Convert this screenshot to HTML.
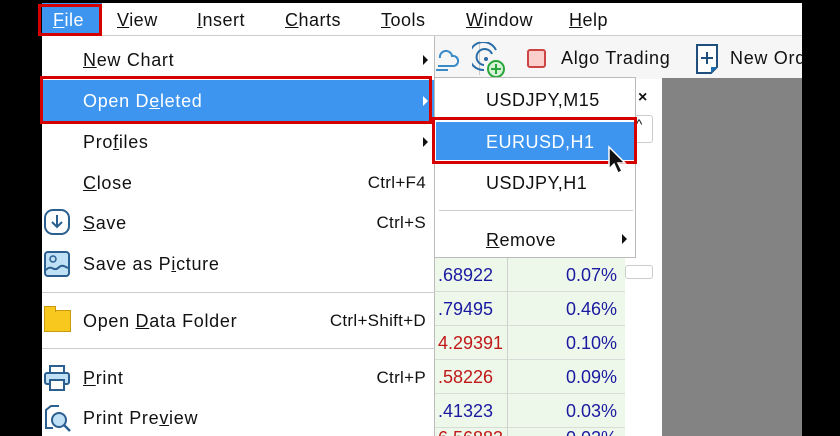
<!DOCTYPE html><html><head><style>
*{margin:0;padding:0;box-sizing:border-box}
html{width:840px;height:436px;overflow:hidden;background:#000}
body{width:840px;height:436px;background:#000;position:relative;overflow:hidden;font-family:"Liberation Sans","Noto Sans CJK JP",sans-serif;color:#111}
.abs{position:absolute;white-space:nowrap}
.mb{left:42px;top:3px;width:760px;height:33px;background:#fff;border-bottom:1px solid #ccc}
.mb span{position:absolute;top:7px;font-size:18px;letter-spacing:0.5px}
.tb{left:42px;top:36px;width:760px;height:43px;background:#f6f6f6;overflow:hidden}
.gray{left:662px;top:78px;width:140px;height:358px;background:#838383}
.panel{left:435px;top:79px;width:227px;height:357px;background:#fff}
.row{position:absolute;left:435px;width:190px;height:34px;background:#eef8ea;border-bottom:1px solid #d8dcd6;overflow:hidden}
.row .a{position:absolute;left:3px;top:7px;font-size:18px}
.row .b{position:absolute;right:8px;top:7px;font-size:18px;color:#1a1aa0}
.vl{position:absolute;left:507px;top:258px;width:1px;height:178px;background:#d0d0d0}
.menu{left:42px;top:36px;width:393px;height:400px;background:#fff;border-right:1px solid #bbb}
.it{position:absolute;left:41px;font-size:18px;letter-spacing:0.7px}
.sc{position:absolute;right:8px;font-size:17px;letter-spacing:0.3px}
.ar{position:absolute;right:6px;width:0;height:0;border-top:5px solid transparent;border-bottom:5px solid transparent;border-left:5px solid #111}
.sep{position:absolute;left:0;width:393px;height:1px;background:#ccc}
.sub{left:434px;top:77px;width:202px;height:181px;background:#fff;border:1px solid #bbb}
.sub .t{position:absolute;left:51px;font-size:18px;letter-spacing:0.5px}
u{text-decoration:underline}
</style></head><body>
<div class="abs mb">
<div class="abs" style="left:0;top:0;width:60px;height:33px;background:#3d95f0"></div>
<span style="left:11px;color:#fff"><u>F</u>ile</span>
<span style="left:75px"><u>V</u>iew</span>
<span style="left:155px"><u>I</u>nsert</span>
<span style="left:243px"><u>C</u>harts</span>
<span style="left:339px"><u>T</u>ools</span>
<span style="left:424px"><u>W</u>indow</span>
<span style="left:527px"><u>H</u>elp</span>
</div>
<div class="abs" style="left:38px;top:4px;width:64px;height:32px;border:3px solid #d40000"></div>
<div class="abs tb">
<div class="abs" style="left:437px;top:5px;width:1px;height:34px;background:#ccc"></div>
<svg class="abs" style="left:390px;top:8px" width="30" height="34"><path d="M8 14a6 6 0 0 1 12-2a5 5 0 0 1 2 10H6" fill="none" stroke="#3a8ac8" stroke-width="2"/><path d="M4 26h12" stroke="#3a8ac8" stroke-width="2"/></svg>
<svg class="abs" style="left:430px;top:6px" width="36" height="36"><path d="M24 8a14 14 0 1 0 -12 20" fill="none" stroke="#2a6da8" stroke-width="2"/><path d="M20 12a8 8 0 1 0 -8 11" fill="none" stroke="#2a6da8" stroke-width="2"/><circle cx="14" cy="17" r="2" fill="#2a6da8"/><circle cx="24" cy="27" r="8" fill="#d7f3d7" stroke="#29a63a" stroke-width="2"/><path d="M24 22v10M19 27h10" stroke="#29a63a" stroke-width="2"/></svg>
<div class="abs" style="left:485px;top:13px;width:19px;height:19px;background:#fbd0cc;border:2px solid #c44;border-radius:3px"></div>
<span class="abs" style="left:519px;top:12px;font-size:18px;letter-spacing:0.7px">Algo Trading</span>
<svg class="abs" style="left:652px;top:6px" width="26" height="34"><path d="M3 3h20v22l-6 6H3z" fill="#fff" stroke="#1f4f7a" stroke-width="2"/><path d="M13 10v12M7 16h12" stroke="#1f4f7a" stroke-width="2"/><path d="M17 31v-6h6" fill="#1f6fb0"/></svg>
<span class="abs" style="left:688px;top:12px;font-size:18px;letter-spacing:0.7px">New Order</span>
</div>
<div class="abs gray"></div>
<div class="abs panel">
<span class="abs" style="left:203px;top:10px;font-size:16px;font-weight:bold">×</span>
<div class="abs" style="left:190px;top:36px;width:28px;height:28px;border:1px solid #ccc;border-radius:3px;font-size:14px;text-align:center">^</div>
<div class="abs" style="left:190px;top:186px;width:28px;height:14px;border:1px solid #ccc;border-radius:3px"></div>
</div>
<div class="row" style="top:258px"><span class="a" style="color:#1a1aa0">.68922</span><span class="b">0.07%</span></div>
<div class="row" style="top:292px"><span class="a" style="color:#1a1aa0">.79495</span><span class="b">0.46%</span></div>
<div class="row" style="top:326px"><span class="a" style="color:#c01818">4.29391</span><span class="b">0.10%</span></div>
<div class="row" style="top:360px"><span class="a" style="color:#c01818">.58226</span><span class="b">0.09%</span></div>
<div class="row" style="top:394px"><span class="a" style="color:#1a1aa0">.41323</span><span class="b">0.03%</span></div>
<div class="row" style="top:428px;height:8px;border-bottom:none"><span class="a" style="color:#c01818;top:0">6.56883</span><span class="b" style="top:0">0.02%</span></div>
<div class="vl"></div>
<div class="abs menu">
<span class="it" style="top:14px"><u>N</u>ew Chart</span><div class="ar" style="top:19px"></div>
<div class="abs" style="left:0;top:44px;width:393px;height:41px;background:#3d95f0"></div>
<span class="it" style="top:55px;color:#fff">Open D<u>e</u>leted</span><div class="ar" style="top:60px;border-left-color:#fff"></div>
<span class="it" style="top:96px">Pro<u>f</u>iles</span><div class="ar" style="top:101px"></div>
<span class="it" style="top:137px"><u>C</u>lose</span><span class="sc" style="top:137px">Ctrl+F4</span>
<svg class="abs" style="left:1px;top:172px" width="28" height="28"><rect x="2" y="2" width="24" height="24" rx="8" fill="#fff" stroke="#2a5f90" stroke-width="2"/><path d="M14 7v12M9 14l5 5 5-5" fill="none" stroke="#2a5f90" stroke-width="2"/></svg>
<span class="it" style="top:177px"><u>S</u>ave</span><span class="sc" style="top:177px">Ctrl+S</span>
<svg class="abs" style="left:1px;top:214px" width="28" height="28"><rect x="2" y="2" width="24" height="24" rx="3" fill="#bfe0f5" stroke="#2a5f90" stroke-width="2"/><circle cx="10" cy="9" r="3" fill="none" stroke="#2a5f90" stroke-width="1.5"/><path d="M3 20c5-6 8 2 12-2s6-2 10 0" fill="none" stroke="#2a5f90" stroke-width="2"/></svg>
<span class="it" style="top:218px">Save as P<u>i</u>cture</span>
<div class="sep" style="top:256px"></div>
<div class="abs" style="left:2px;top:274px;width:27px;height:22px;background:#f8c81e;border:1px solid #c89a10"></div>
<div class="abs" style="left:2px;top:270px;width:12px;height:6px;background:#f8c81e;border:1px solid #c89a10;border-bottom:none"></div>
<span class="it" style="top:275px">Open <u>D</u>ata Folder</span><span class="sc" style="top:275px">Ctrl+Shift+D</span>
<div class="sep" style="top:312px"></div>
<svg class="abs" style="left:1px;top:328px" width="28" height="28"><rect x="7" y="2" width="14" height="8" fill="#fff" stroke="#2a5f90" stroke-width="2"/><rect x="2" y="9" width="24" height="11" rx="2" fill="#bfe0f5" stroke="#2a5f90" stroke-width="2"/><rect x="7" y="16" width="14" height="10" fill="#fff" stroke="#2a5f90" stroke-width="2"/></svg>
<span class="it" style="top:332px"><u>P</u>rint</span><span class="sc" style="top:332px">Ctrl+P</span>
<svg class="abs" style="left:1px;top:368px" width="30" height="30"><path d="M10 24H3V6l5-4h8" fill="none" stroke="#2a5f90" stroke-width="2"/><circle cx="16" cy="16" r="7" fill="#bfe0f5" stroke="#2a5f90" stroke-width="2"/><path d="M21 21l6 6" stroke="#2a5f90" stroke-width="2.5"/></svg>
<span class="it" style="top:372px">Print Pre<u>v</u>iew</span>
</div>
<div class="abs" style="left:40px;top:76px;width:392px;height:48px;border:3px solid #d40000"></div>
<div class="abs sub">
<span class="t" style="top:12px">USDJPY,M15</span>
<div class="abs" style="left:1px;top:44px;width:198px;height:38px;background:#3d95f0"></div>
<span class="t" style="top:54px;color:#fff">EURUSD,H1</span>
<span class="t" style="top:95px">USDJPY,H1</span>
<div class="abs" style="left:4px;top:132px;width:194px;height:1px;background:#ccc"></div>
<span class="t" style="top:152px"><u>R</u>emove</span>
<div class="ar" style="top:156px;right:8px"></div>
</div>
<div class="abs" style="left:432px;top:117px;width:205px;height:47px;border:3px solid #d40000"></div>
<svg class="abs" style="left:607px;top:145px" width="22" height="32"><path d="M2 2v22l5-5 4 9 4-2-4-8h7z" fill="#111" stroke="#fff" stroke-width="1.5"/></svg>
</body></html>
